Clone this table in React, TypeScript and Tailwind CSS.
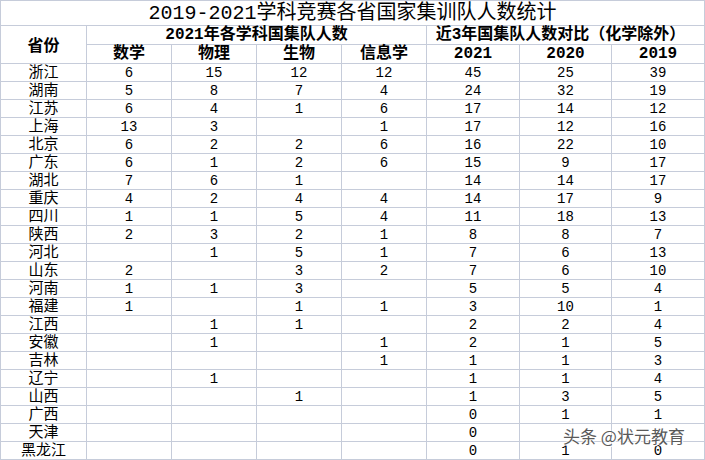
const ROWS: [string, ...string[]][] = [
  ["浙江", "6", "15", "12", "12", "45", "25", "39"],
  ["湖南", "5", "8", "7", "4", "24", "32", "19"],
  ["江苏", "6", "4", "1", "6", "17", "14", "12"],
  ["上海", "13", "3", "", "1", "17", "12", "16"],
  ["北京", "6", "2", "2", "6", "16", "22", "10"],
  ["广东", "6", "1", "2", "6", "15", "9", "17"],
  ["湖北", "7", "6", "1", "", "14", "14", "17"],
  ["重庆", "4", "2", "4", "4", "14", "17", "9"],
  ["四川", "1", "1", "5", "4", "11", "18", "13"],
  ["陕西", "2", "3", "2", "1", "8", "8", "7"],
  ["河北", "", "1", "5", "1", "7", "6", "13"],
  ["山东", "2", "", "3", "2", "7", "6", "10"],
  ["河南", "1", "1", "3", "", "5", "5", "4"],
  ["福建", "1", "", "1", "1", "3", "10", "1"],
  ["江西", "", "1", "1", "", "2", "2", "4"],
  ["安徽", "", "1", "", "1", "2", "1", "5"],
  ["吉林", "", "", "", "1", "1", "1", "3"],
  ["辽宁", "", "1", "", "", "1", "1", "4"],
  ["山西", "", "", "1", "", "1", "3", "5"],
  ["广西", "", "", "", "", "0", "1", "1"],
  ["天津", "", "", "", "", "0", "", ""],
  ["黑龙江", "", "", "", "", "0", "1", "0"],
];

const SUBJECTS = ["数学", "物理", "生物", "信息学", "2021", "2020", "2019"];

const cell = "flex items-center justify-center border-r border-b border-[#c6ccda] leading-none";

export default function App() {
  return (
    <div className="relative w-[705px] h-[460px] overflow-hidden bg-white text-black font-['Liberation_Mono','Noto_Sans_CJK_SC',monospace]">
      <div className="grid grid-cols-[86px_85px_85px_85px_85px_93px_92px_93px] grid-rows-[25px_19px_19px_repeat(22,18px)] border-l border-t border-[#c6ccda]">
        {/* title */}
        <div className={`${cell} col-span-8 text-[20px] pt-[2px]`}>2019-2021学科竞赛各省国家集训队人数统计</div>

        {/* header */}
        <div className={`${cell} row-span-2 text-[16px] font-bold pt-[4px]`}>省份</div>
        <div className={`${cell} col-span-4 text-[16px] font-bold`}>2021年各学科国集队人数</div>
        <div className={`${cell} col-span-3 text-[16px] font-bold pr-[10px]`}>近3年国集队人数对比（化学除外）</div>
        {SUBJECTS.map((s) => (
          <div key={s} className={`${cell} text-[16px] font-bold`}>
            {s}
          </div>
        ))}

        {/* data */}
        {ROWS.map((row) =>
          row.map((v, i) => (
            <div key={row[0] + i} className={`${cell} ${i === 0 ? "text-[15px]" : "text-[14px]"} pt-[1px]`}>
              {v}
            </div>
          ))
        )}
      </div>

      {/* watermark */}
      <div className="absolute left-[563px] top-[427px] text-[17px] leading-none text-[#5a5a5a] font-['Noto_Sans_CJK_SC',sans-serif] [text-shadow:0_0_2px_#fff,0_0_2px_#fff,1px_1px_0_#fff]">
        头条 @状元教育
      </div>
    </div>
  );
}
